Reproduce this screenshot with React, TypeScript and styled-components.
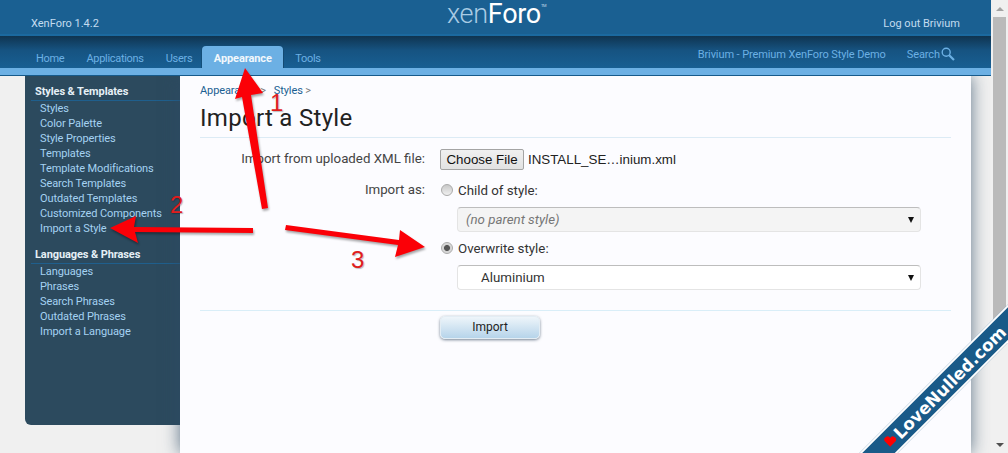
import React from 'react'
import styled, { createGlobalStyle } from 'styled-components'

const GlobalStyle = createGlobalStyle`
  html, body { margin: 0; padding: 0; height: 100%; overflow: hidden; background: #f0f0f0; }
  * { box-sizing: border-box; }
`

const uiFont = `Roboto, "Noto Sans", "Liberation Sans", sans-serif`

const Page = styled.div`
  position: relative;
  display: flex;
  width: 1008px;
  height: 453px;
  overflow: hidden;
  font-family: ${uiFont};
  font-size: 11px;
  letter-spacing: -0.1px;
`

const Main = styled.div`
  flex: 1;
  min-width: 0;
  display: flex;
  flex-direction: column;
`

const TopBar = styled.header`
  position: relative;
  z-index: 2;
  height: 36px;
  flex: none;
  padding: 16px 31px 0 31px;
  display: flex;
  justify-content: space-between;
  background: #1a6092;
  border-bottom: 2px solid #1b699f;
  color: #c3dcf0;
  line-height: 15px;
  letter-spacing: 0;
`

const Logo = styled.div`
  position: absolute;
  left: 447px;
  top: 0;
  font-family: Roboto, sans-serif;
  font-weight: 300;
  font-size: 27px;
  letter-spacing: -0.3px;
  line-height: 28px;
  color: #a9cbe4;
  b { font-weight: 400; color: #fff; }
  sup { font-size: 4px; line-height: 0; vertical-align: 16px; color: #cde; font-weight: 400; }
`

const NavBar = styled.nav`
  position: relative;
  z-index: 2;
  height: 32px;
  flex: none;
  display: flex;
  align-items: flex-end;
  justify-content: space-between;
  padding: 0 36px 0 25px;
  background: linear-gradient(#0f3450 0, #165381 45%, #185f93 100%);
  color: #6cb0e4;
`

const NavGroup = styled.div`
  display: flex;
  align-items: flex-end;
  height: 22px;
`

const NavItem = styled.div<{ $active?: boolean }>`
  height: 22px;
  padding: 0 ${p => (p.$active ? '11.5px' : '11px')};
  margin: 0 ${p => (p.$active ? '1px' : '0')} 0 ${p => (p.$active ? '-1px' : '0')};
  line-height: 26px;
  letter-spacing: -0.3px;
  white-space: nowrap;
  ${p => p.$active && `
    background: #6cb0e4;
    color: #f2f8fc;
    font-weight: 700;
    letter-spacing: -0.1px;
    border-radius: 4px 4px 0 0;
    box-shadow: 0 0 0 1px #134a73;
    clip-path: inset(-1px -1px 0 -1px);
  `}
`

const NavNote = styled.span`
  line-height: 26px;
`

const SearchLink = styled.div`
  display: flex;
  align-items: center;
  gap: 1px;
  line-height: 26px;
  margin-left: 21px;
  svg { margin-top: -3px; }
`

const TabStrip = styled.div`
  position: relative;
  z-index: 2;
  height: 8px;
  flex: none;
  background: #6cb0e4;
  border-bottom: 1px solid #165a8b;
`

const Body = styled.div`
  flex: 1;
  display: flex;
  align-items: stretch;
  padding-left: 25px;
  padding-right: 20px;
`

const Sidebar = styled.aside`
  width: 155px;
  height: 349px;
  flex: none;
  padding: 9px 0 0 6px;
  background: #2c4a5e;
  border-radius: 0 0 0 6px;
`

const SideHeading = styled.h3`
  margin: 0;
  padding: 0 0 1px 4px;
  height: 16px;
  font-size: 11px;
  line-height: 14px;
  font-weight: 700;
  color: #e6f0f6;
  border-bottom: 1px solid #1f5f8d;
`

const SideList = styled.ul`
  list-style: none;
  margin: 0 0 12px;
  padding: 0 0 0 9px;
`

const SideItem = styled.li`
  height: 15px;
  line-height: 15px;
  color: #a5d2f2;
  white-space: nowrap;
`

const Content = styled.main`
  flex: 1;
  min-width: 0;
  padding: 7px 20px 0;
  background: #fcfcff;
  box-shadow: 0 0 16px rgba(45, 75, 100, 0.75);
  color: #333;
`

const Crumbs = styled.div`
  display: flex;
  gap: 8px;
  height: 15px;
  line-height: 15px;
  color: #1b5f92;
  span span { color: #777; }
`

const Title = styled.h1`
  margin: 4px 0 0;
  height: 36px;
  font-size: 24px;
  line-height: 32px;
  font-weight: 400;
  color: #222;
  border-bottom: 1px solid #dcebf5;
  letter-spacing: 0.3px;
`

const Form = styled.div`
  display: grid;
  grid-template-columns: 225px 1fr;
  column-gap: 15px;
  padding-top: 10px;
  font-size: 13.3px;
  letter-spacing: 0;
`

const Label = styled.div<{ $offset?: number }>`
  padding-top: ${p => p.$offset ?? 0}px;
  text-align: right;
  line-height: 22px;
  color: #444;
  white-space: nowrap;
`

const FileRow = styled.div`
  display: flex;
  align-items: center;
  gap: 4px;
  height: 22px;
  font-family: "Liberation Sans", Arial, sans-serif;
  font-size: 13.33px;
  color: #222;
`

const FileButton = styled.button`
  width: 84px;
  height: 21px;
  padding: 0;
  font: inherit;
  color: #111;
  background: linear-gradient(#f0f0f0, #e2e2e2);
  border: 1px solid #a4a4a4;
  border-radius: 2px;
`

const RadioStack = styled.div`
  display: flex;
  flex-direction: column;
  padding-top: 10px;
`

const RadioLine = styled.div`
  display: flex;
  align-items: center;
  gap: 5px;
  height: 20px;
  padding-left: 1px;
  color: #333;
`

const RadioDot = styled.span<{ $checked?: boolean }>`
  width: 12px;
  height: 12px;
  flex: none;
  border-radius: 50%;
  border: 1px solid #aaa;
  background: ${p =>
    p.$checked
      ? 'radial-gradient(circle, #555 0 2.6px, #d0d0d0 3.4px, #eee 100%)'
      : 'linear-gradient(#c8c8c8, #f0f0f0)'};
`

const Select = styled.div<{ $disabled?: boolean }>`
  display: flex;
  align-items: center;
  justify-content: space-between;
  width: 464px;
  height: 25px;
  margin: 7px 0 6px 17px;
  padding: 0 6px 0 ${p => (p.$disabled ? '8px' : '23px')};
  font-style: ${p => (p.$disabled ? 'italic' : 'normal')};
  color: ${p => (p.$disabled ? '#777' : '#333')};
  background: ${p => (p.$disabled ? '#f4f4f4' : '#fff')};
  border: 1px solid #e4e4e4;
  border-top-color: #bdbdbd;
  border-radius: 4px;
`

const Caret = styled.span`
  width: 0;
  height: 0;
  border-left: 3.5px solid transparent;
  border-right: 3.5px solid transparent;
  border-top: 6px solid #111;
`

const FormFoot = styled.div`
  margin-top: 14px;
  height: 30px;
  padding: 5px 0 0 240px;
  border-top: 1px solid #d9eef8;
`

const SubmitButton = styled.button`
  width: 100px;
  height: 23px;
  padding: 0 0 2px;
  font: inherit;
  font-size: 12px;
  color: #222;
  border: 1px solid #e3edf4;
  border-radius: 5px;
  background: linear-gradient(#eef5fa, #b6d4ea);
  box-shadow: 0 1px 3px rgba(60, 80, 100, 0.7);
`

const ScrollTrack = styled.div`
  position: relative;
  z-index: 3;
  width: 17px;
  flex: none;
  display: flex;
  flex-direction: column;
  align-items: center;
  background: #f0f0f0;
`

const ScrollArrow = styled.div<{ $down?: boolean }>`
  height: 17px;
  flex: none;
  display: flex;
  align-items: center;
  justify-content: center;
  &::before {
    content: '';
    border-left: 4px solid transparent;
    border-right: 4px solid transparent;
    ${p => (p.$down ? 'border-top: 4px solid #505050;' : 'border-bottom: 4px solid #a3a3a3;')}
  }
`

const ScrollThumb = styled.div`
  width: 13px;
  height: 325px;
  background: #bababa;
`

const ScrollGap = styled.div`
  flex: 1;
`

const ArrowLayer = styled.svg`
  position: absolute;
  left: 0;
  top: 0;
  z-index: 4;
  pointer-events: none;
  filter: drop-shadow(1px 2px 1px rgba(0, 0, 0, 0.35));
`

const StepNumber = styled.span<{ $x: number; $y: number }>`
  position: absolute;
  left: ${p => p.$x}px;
  top: ${p => p.$y}px;
  z-index: 4;
  font-family: "Liberation Sans", Arial, sans-serif;
  font-size: 24px;
  letter-spacing: 0;
  line-height: 24px;
  color: #e01d1d;
  text-shadow: 1px 1px 1px rgba(0, 0, 0, 0.25);
`

const Ribbon = styled.div`
  position: absolute;
  z-index: 5;
  left: 795px;
  top: 373px;
  width: 300px;
  height: 27px;
  transform: rotate(-45deg);
  display: flex;
  align-items: center;
  padding-left: 66px;
  gap: 2px;
  background: #195a88;
  border-top: 2px solid #fff;
  border-bottom: 2px solid #fff;
  font-family: "DejaVu Sans", sans-serif;
  font-weight: 700;
  font-size: 16.8px;
  letter-spacing: 0;
  color: #fff;
  white-space: nowrap;
`

const mainMenu = ['Styles', 'Color Palette', 'Style Properties', 'Templates', 'Template Modifications', 'Search Templates', 'Outdated Templates', 'Customized Components', 'Import a Style']
const langMenu = ['Languages', 'Phrases', 'Search Phrases', 'Outdated Phrases', 'Import a Language']

export default function App() {
  return (
    <Page>
      <GlobalStyle />
      <Main>
        <TopBar>
          <span>XenForo 1.4.2</span>
          <Logo>xen<b>Foro</b><sup>TM</sup></Logo>
          <span>Log out Brivium</span>
        </TopBar>
        <NavBar>
          <NavGroup>
            <NavItem>Home</NavItem>
            <NavItem>Applications</NavItem>
            <NavItem>Users</NavItem>
            <NavItem $active>Appearance</NavItem>
            <NavItem>Tools</NavItem>
          </NavGroup>
          <NavGroup>
            <NavNote>Brivium - Premium XenForo Style Demo</NavNote>
            <SearchLink>
              Search
              <svg width="14" height="14" viewBox="0 0 14 14" fill="none" stroke="#6cb0e4">
                <circle cx="5.2" cy="5.2" r="4" strokeWidth="1.4" />
                <path d="M8.2 8.2 L13 13" strokeWidth="2.2" />
              </svg>
            </SearchLink>
          </NavGroup>
        </NavBar>
        <TabStrip />
        <Body>
          <Sidebar>
            <SideHeading>Styles &amp; Templates</SideHeading>
            <SideList>
              {mainMenu.map(item => <SideItem key={item}>{item}</SideItem>)}
            </SideList>
            <SideHeading>Languages &amp; Phrases</SideHeading>
            <SideList>
              {langMenu.map(item => <SideItem key={item}>{item}</SideItem>)}
            </SideList>
          </Sidebar>
          <Content>
            <Crumbs>
              <span>Appearance <span>&gt;</span></span>
              <span>Styles <span>&gt;</span></span>
            </Crumbs>
            <Title>Import a Style</Title>
            <Form>
              <Label>Import from uploaded XML file:</Label>
              <FileRow>
                <FileButton>Choose File</FileButton>
                <span>INSTALL_SE…inium.xml</span>
              </FileRow>
              <Label $offset={9}>Import as:</Label>
              <RadioStack>
                <RadioLine><RadioDot />Child of style:</RadioLine>
                <Select $disabled>(no parent style)<Caret /></Select>
                <RadioLine><RadioDot $checked />Overwrite style:</RadioLine>
                <Select>Aluminium<Caret /></Select>
              </RadioStack>
            </Form>
            <FormFoot>
              <SubmitButton>Import</SubmitButton>
            </FormFoot>
          </Content>
        </Body>
      </Main>
      <ScrollTrack>
        <ScrollArrow />
        <ScrollThumb />
        <ScrollGap />
        <ScrollArrow $down />
      </ScrollTrack>

      <ArrowLayer width="1008" height="453" viewBox="0 0 1008 453">
        <polygon fill="#fb0007" points="245,68 263,93 251,95 268,208 262,209 242,97 235,99" />
        <polygon fill="#fb0007" points="110,228 136,216 134,227 253,228 253,233 135,232 138,243" />
        <polygon fill="#fb0007" points="425,247 395,257 398,245 285,230 286,225 399,240 400,230" />
      </ArrowLayer>
      <StepNumber $x={270} $y={91}>1</StepNumber>
      <StepNumber $x={170} $y={193}>2</StepNumber>
      <StepNumber $x={351} $y={248}>3</StepNumber>

      <Ribbon>
        <svg width="13" height="13" viewBox="0 0 12 12" style={{ transform: 'rotate(45deg)' }}>
          <path fill="#f00" d="M6 11 L1 6 A2.8 2.8 0 0 1 6 3 A2.8 2.8 0 0 1 11 6 Z" />
        </svg>
        LoveNulled.com
      </Ribbon>
    </Page>
  )
}
